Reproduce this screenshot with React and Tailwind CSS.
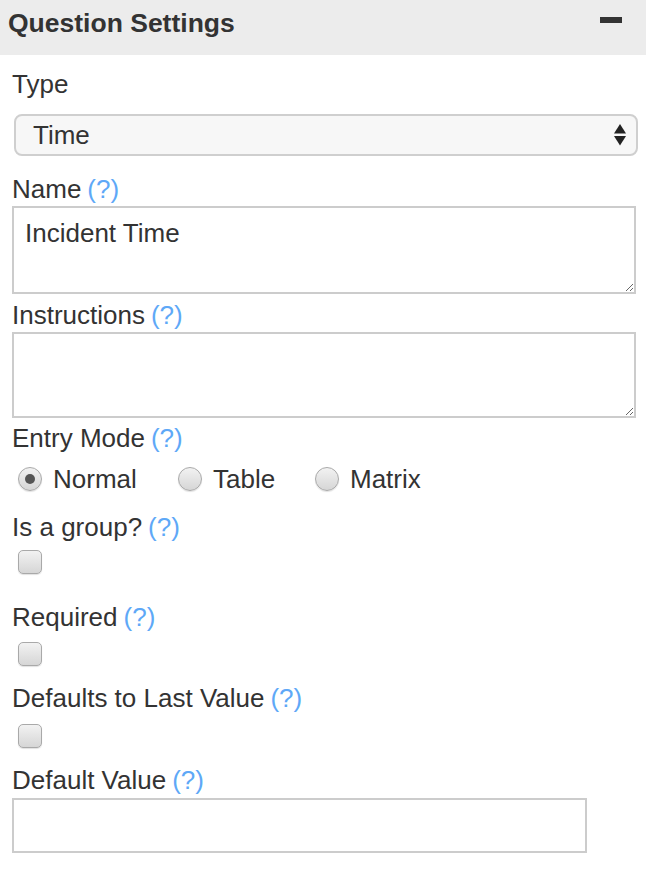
import { useState } from "react";

function Help() {
  return <span className="text-[#5ea8f7] ml-[6px]">(?)</span>;
}

function Label({ children, help = true, className = "" }) {
  return (
    <div className={`text-[26px] leading-[30px] ${className}`}>
      {children}
      {help && <Help />}
    </div>
  );
}

function Radio({ checked }) {
  return (
    <span className="w-[24px] h-[24px] rounded-full border-[1.5px] border-[#a9a9a9] bg-linear-to-b from-[#f2f2f2] to-[#d6d6d6] shadow-[0_1px_1px_rgba(0,0,0,0.12)] flex items-center justify-center shrink-0">
      {checked && <span className="w-[10px] h-[10px] rounded-full bg-[#555]" />}
    </span>
  );
}

function Checkbox({ className = "" }) {
  return (
    <div className={`ml-[6px] w-[24px] h-[24px] rounded-[5px] border-[1.5px] border-[#a9a9a9] bg-linear-to-b from-[#f2f2f2] to-[#d6d6d6] shadow-[0_1px_1px_rgba(0,0,0,0.12)] ${className}`} />
  );
}

export default function App() {
  const [mode, setMode] = useState("normal");

  return (
    <div className="w-[646px] min-h-[878px] bg-white text-[#333] font-['Liberation_Sans',Arial,sans-serif]">
      <div className="h-[55px] bg-[#ececec] flex justify-between pl-[8px] pr-[24px] pt-[8px]">
        <h2 className="text-[26.5px] leading-[30px] font-bold">Question Settings</h2>
        <div className="mt-[9px] w-[22px] h-[6px] bg-[#333]" />
      </div>

      <div className="px-[12px]">
        <Label help={false} className="mt-[14px]">Type</Label>
        <div className="relative mt-[15px] ml-[2px] w-[624px] h-[42px]">
          <select
            defaultValue="Time"
            className="appearance-none w-full h-full border-2 border-[#cfcfcf] rounded-[8px] bg-[#f7f7f7] pl-[17px] pb-[8px] text-[26px] text-[#333] outline-none"
          >
            <option>Text</option>
            <option>Number</option>
            <option>Date</option>
            <option>Time</option>
          </select>
          <svg className="absolute right-[12px] top-[10px] pointer-events-none" width="12" height="22" viewBox="0 0 12 22">
            <path d="M6 0 L12 9.5 L0 9.5 Z" fill="#222" />
            <path d="M0 12 L12 12 L6 21.5 Z" fill="#222" />
          </svg>
        </div>

        <Label className="mt-[18px]">Name</Label>
        <textarea
          defaultValue="Incident Time"
          className="block mt-[2px] w-[624px] h-[88px] border-2 border-[#cccccc] px-[11px] pt-[10px] text-[26px] leading-[30px] text-[#333] outline-none"
        />

        <Label className="mt-[6px]">Instructions</Label>
        <textarea className="block mt-[2px] w-[624px] h-[86px] border-2 border-[#cccccc] px-[11px] pt-[10px] text-[26px] leading-[30px] outline-none" />

        <Label className="mt-[5px]">Entry Mode</Label>
        <div className="mt-[11px] ml-[6px] flex items-center h-[30px] text-[26px] leading-[30px]">
          {[
            { id: "normal", label: "Normal", w: "w-[160px]" },
            { id: "table", label: "Table", w: "w-[137px]" },
            { id: "matrix", label: "Matrix", w: "w-auto" },
          ].map(r => (
            <label key={r.id} onClick={() => setMode(r.id)} className={`flex items-center gap-[11px] cursor-pointer ${r.w}`}>
              <Radio checked={mode === r.id} />
              <span>{r.label}</span>
            </label>
          ))}
        </div>

        <Label className="mt-[18px]">Is a group?</Label>
        <Checkbox className="mt-[8px]" />

        <Label className="mt-[28px]">Required</Label>
        <Checkbox className="mt-[10px]" />

        <Label className="mt-[17px]">Defaults to Last Value</Label>
        <Checkbox className="mt-[11px]" />

        <Label className="mt-[17px]">Default Value</Label>
        <input className="block mt-[3px] w-[575px] h-[55px] border-2 border-[#cccccc] px-[11px] text-[26px] outline-none" />
      </div>
    </div>
  );
}
